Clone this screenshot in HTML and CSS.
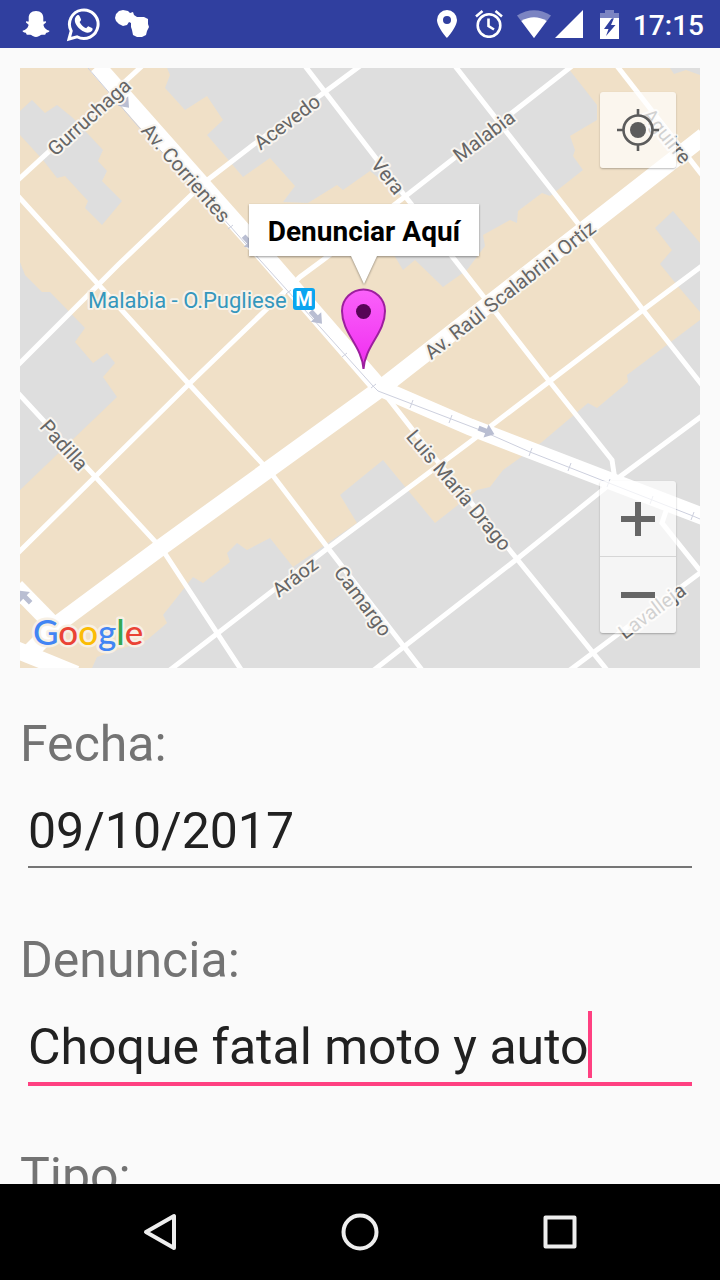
FILE: index.html
```html
<!DOCTYPE html>
<html lang="es">
<head>
<meta charset="utf-8">
<meta name="viewport" content="width=device-width, initial-scale=1">
<title>Denuncia</title>
<link rel="stylesheet" href="styles.css">
</head>
<body>
<header class="status">
  <div class="status-group notices">
    <svg width="28" height="28" viewBox="0 0 28 28" aria-label="Snapchat"><path fill="#fff" d="M14 1c5 0 7.300 3 7.300 7v3.500c1 .4 2-.7 2.700.2.600 1-2.300 2-2.600 3.300.8 3.200 3 5 6 5.800.2 1.500-2.500 1.900-3.400 2.200-.4.700-.2 1.700-1.200 1.800-1.300.1-2.500-.4-4 .3-1.600.8-2.600 2-4.800 2s-3.200-1.200-4.800-2c-1.500-.7-2.700-.2-4-.3-1-.1-.8-1.100-1.200-1.800-.9-.3-3.600-.7-3.400-2.200 3-.8 5.200-2.600 6-5.800C6.300 13.700 3.400 12.700 4 11.700c.7-.9 1.700.2 2.700-.2V8c0-4 2.300-7 7.300-7z"/></svg>
    <svg width="34" height="36" viewBox="0 0 34 36" aria-label="WhatsApp"><path fill="none" stroke="#fff" stroke-width="3" d="M3 33l2.200-8A14.300 14.300 0 1 1 11 30.800z"/><path fill="#fff" d="M11 9.500c1-.8 2-.6 2.500.4l1.500 3.300c.3 1-.3 1.700-1.400 2.900 1.500 3 3.600 5 6.600 6.200 1-1 1.700-2.300 2.600-1.900l3.200 1.600c1 .5.700 2-.2 3-3 3-7.500 1.500-11-1.200-3.300-2.700-6-6.200-6-9.900 0-1.800.9-3.400 2.200-4.400z"/></svg>
    <svg width="36" height="30" viewBox="0 0 36 30" aria-label="Mensajes"><path fill="#fff" d="M1 9L2 5 5 2 9 1 14 2 16 4 19 3 20 6 23 8H30L34 10V15L35 18 33 22 32 26 28 28H23L19 26 18 21 17 18V14L15 13 13 16 9 17 5 15 2 12z"/></svg>
  </div>
  <div class="status-group system">
    <svg class="pin-icon" width="20" height="28" viewBox="0 0 20 28"><path fill="#fff" fill-rule="evenodd" d="M10 0a10 10 0 0 1 10 10c0 7-10 18-10 18S0 17 0 10A10 10 0 0 1 10 0zm0 6a4 4 0 1 0 0 8 4 4 0 0 0 0-8z"/></svg>
    <svg width="28" height="28" viewBox="0 0 28 28"><g fill="none" stroke="#fff" stroke-width="2.600"><circle cx="14" cy="15.500" r="11.300"/><path d="M13.500 8.500v7.500l5.500 3.500M1 6.500L7.500 1M27 6.500L20.500 1"/></g></svg>
    <svg class="wifi-icon" width="34" height="28" viewBox="0 0 34 28"><path fill="#7b84c2" d="M0 5.500Q17-5 34 5.500L17 28z"/><path fill="#fff" d="M4.300 11Q17 3.500 29.700 11L17 28z"/></svg>
    <svg class="cell-icon" width="28" height="28" viewBox="0 0 28 28"><path fill="#fff" d="M28 0v28H0z"/></svg>
    <svg class="battery-icon" width="19" height="29" viewBox="0 0 19 29"><path fill="#7b84c2" d="M0 3h5V0h9v3h5v6H0z"/><path fill="#fff" fill-rule="evenodd" d="M0 8h19v21H0zM12 8L4 19h4.500L6 26l9.500-11H11l3-7z"/></svg>
    <time class="clock">17:15</time>
  </div>
</header>

<main class="content">
  <section class="map" aria-label="Mapa">
    <svg class="map-canvas" viewBox="20 68 680 600">
      <rect class="land" x="20" y="68" width="680" height="600"/>
      <g class="blocks">
        <path d="M20 111L32 100 45 113 57 105 73 118 103 150 98 161 107 171 102 181 122 201 102 225 85 208 88 201 65 176 57 178 43 160 20 135z"/>
        <path d="M167 68L170 75 165 88 185 110 207 96 223 120 207 135 243 177 270 158 295 186 283 202 308 203 337 185 343 190 370 171 410 204 388 245 403 270 415 260 443 287 467 270 485 246 483 235 510 220 517 223 518 211 542 193 550 196 583 170 573 156 575 150 570 136 597 120 597 105 568 68z"/>
        <path d="M670 68L674 74 686 70 700 75V68z"/>
        <path d="M673 211L700 243V312L677 285 660 264 672 250 655 228z"/>
        <path d="M700 320L627 375 628 382 597 408 588 403 542 442 503 470 490 487 477 490 435 523 383 460 340 495 357 523 293 567 270 538 247 550 237 543 227 553 230 562 203 583 193 577 163 615 167 623 147 640 97 657 92 668H700z"/>
        <path d="M20 262L25 275 42 292 50 292 85 328 75 342 93 363 107 353 115 363 103 377 117 397 20 490z"/>
      </g>
      <g class="streets">
        <path d="M18 180L142 66"/>
        <path d="M18 365L119 264 205 182 253 145 360 66"/>
        <path d="M18 553L190 383 300 277 323 260 407 195 572 66"/>
        <path d="M170 670L328 548 470 442 643 310 702 266"/>
        <path d="M374 670L517 559 610 484 702 416"/>
        <path d="M570 670L700 573"/>
        <path d="M18 393L162 549 242 671"/>
        <path d="M18 196L188 383 271 473 328 548 422 670"/>
        <path d="M380 388L430 452 517 559 607 670"/>
        <path d="M305 66L405 196 550 382 612 460 615 480"/>
        <path d="M455 66L580 226 643 310 702 385"/>
        <path d="M617 66L702 175"/>
        <path d="M667 508L662 523 702 573"/>
      </g>
      <g class="avenues">
        <path d="M97 66L269 260 380 388 470 427 704 517"/>
        <path d="M44 634L160 548 380 389 704 136"/>
        <path d="M16 587L60 632"/>
        <path d="M12 648L76 674"/>
        <path d="M30 652L60 622"/>
      </g>
      <g class="transit">
        <path d="M88 68L137 125 230 226 260 260 373 386 378 391 412 404 480 430 530 452 693 516 700 519"/>
        <path d="M342 357l5-4M371 388l5-4M410 408l3-8M449 423l3-8M529 456l3-8M568 471l3-8M607 487l3-8M650 504l3-8M691 520l3-8M228 229l5-4M286 294l5-4"/>
      </g>
      <defs><path id="arrow" d="M-8-2.500H0V-7L9 0 0 7V2.500H-8z"/></defs>
      <g class="arrows">
        <use href="#arrow" transform="translate(123 101) rotate(48)"/>
        <use href="#arrow" transform="translate(249 242) rotate(48)"/>
        <use href="#arrow" transform="translate(316 317) rotate(48)"/>
        <use href="#arrow" transform="translate(486 431) rotate(21)"/>
        <use href="#arrow" transform="translate(25 597) rotate(225)"/>
      </g>
      <g class="street-names">
        <text transform="translate(89 117) rotate(-42)" y="7">Gurruchaga</text>
        <text transform="translate(186 173) rotate(49)" y="7">Av. Corrientes</text>
        <text transform="translate(287 122) rotate(-37)" y="7">Acevedo</text>
        <text transform="translate(388 176) rotate(52)" y="7">Vera</text>
        <text transform="translate(484 136) rotate(-37)" y="7">Malabia</text>
        <text transform="translate(667 136) rotate(51)" y="7">Aguirre</text>
        <text transform="translate(510 290) rotate(-38)" y="7">Av. Raúl Scalabrini Ortíz</text>
        <text transform="translate(64 445) rotate(48)" y="7">Padilla</text>
        <text transform="translate(459 490) rotate(50)" y="7">Luis María Drago</text>
        <text transform="translate(295 577) rotate(-37)" y="7">Aráoz</text>
        <text transform="translate(363 601) rotate(53)" y="7">Camargo</text>
        <text transform="translate(652 611) rotate(-37)" y="7">Lavalleja</text>
      </g>
      <text class="station" x="88" y="308">Malabia - O.Pugliese</text>
      <rect x="293" y="288" width="22" height="22" rx="3" fill="#0aa5f0"/>
      <text class="metro" x="304" y="306">M</text>
      <text class="brand" x="33" y="645"><tspan fill="#4285f4">G</tspan><tspan fill="#ea4335">o</tspan><tspan fill="#fbbc05">o</tspan><tspan fill="#4285f4">g</tspan><tspan fill="#34a853">l</tspan><tspan fill="#ea4335">e</tspan></text>
      <defs><linearGradient id="pin" x1="0" y1="0" x2="0" y2="1"><stop offset="0" stop-color="#fa62fa"/><stop offset="1" stop-color="#f02cf0"/></linearGradient></defs>
      <path d="M363.500 369C362 346 342 333 342 311a21.500 21.500 0 0 1 43 0C385 333 365 346 363.500 369z" fill="url(#pin)" stroke="#9c1f9e" stroke-width="2"/>
      <circle cx="363.500" cy="311.500" r="7.500" fill="#570557"/>
      <path class="callout" d="M249 204H479V256H377L364 284 351 256H249z"/>
      <text class="callout-text" x="364" y="241">Denunciar Aquí</text>
    </svg>
    <button class="map-button locate" aria-label="Mi ubicación">
      <svg width="42" height="42" viewBox="0 0 42 42"><g fill="none" stroke="#5c5c5c" stroke-width="2.600"><circle cx="21" cy="21" r="14.500"/><path d="M21 0v7M21 35v7M0 21h7M35 21h7"/></g><circle cx="21" cy="21" r="8" fill="#5c5c5c"/></svg>
    </button>
    <div class="zoom-controls">
      <button class="map-button" aria-label="Acercar"><svg width="34" height="34" viewBox="0 0 34 34"><path d="M0 17h34M17 0v34" stroke="#666" stroke-width="6"/></svg></button>
      <button class="map-button" aria-label="Alejar"><svg width="34" height="34" viewBox="0 0 34 34"><path d="M0 17h34" stroke="#666" stroke-width="6"/></svg></button>
    </div>
  </section>

  <form class="form">
    <div class="field">
      <label for="fecha">Fecha:</label>
      <div class="entry"><input id="fecha" type="text" value="09/10/2017"></div>
    </div>
    <div class="field">
      <label for="denuncia">Denuncia:</label>
      <div class="entry active"><input id="denuncia" type="text" value="Choque fatal moto y auto"><span class="caret"></span></div>
    </div>
    <div class="field">
      <label for="tipo">Tipo:</label>
      <div class="entry"><input id="tipo" type="text"></div>
    </div>
  </form>
</main>

<nav class="navbar">
  <button aria-label="Atrás"><svg width="40" height="40" viewBox="0 0 40 40"><path d="M34 4v32L6 20z"/></svg></button>
  <button aria-label="Inicio"><svg width="40" height="40" viewBox="0 0 40 40"><circle cx="20" cy="20" r="16.500"/></svg></button>
  <button aria-label="Recientes"><svg width="40" height="40" viewBox="0 0 40 40"><rect x="5.500" y="5.500" width="29" height="29"/></svg></button>
</nav>
</body>
</html>
```

FILE: styles.css
```css
* { box-sizing: border-box; }

body {
  margin: 0;
  height: 100vh;
  display: flex;
  flex-direction: column;
  background: #fafafa;
  font-family: Roboto, "Noto Sans", sans-serif;
}

button {
  border: 0;
  padding: 0;
  background: none;
  display: flex;
  align-items: center;
  justify-content: center;
}

.status {
  flex: none;
  height: 48px;
  padding: 0 16px 0 22px;
  display: flex;
  align-items: center;
  justify-content: space-between;
  background: #303f9f;
}

.status-group { display: flex; align-items: center; }
.notices { gap: 16px; }
.notices svg:last-child { margin-left: -2px; }
.pin-icon { margin-right: 18px; }
.wifi-icon { margin-left: 14px; }
.cell-icon { margin-left: 4px; }
.battery-icon { margin: 0 14px 0 17px; }

.clock {
  padding-top: 3px;
  color: #fff;
  font-size: 28px;
  font-weight: 500;
  line-height: 32px;
}

.content {
  flex: 1;
  min-height: 0;
  overflow: hidden;
  padding: 20px 20px 0;
}

.map { position: relative; }
.map-canvas { display: block; width: 100%; }

.land { fill: #f0e0c7; }
.blocks { fill: #dedede; }
.streets, .avenues { fill: none; stroke: #fff; }
.streets { stroke-width: 5px; }
.avenues { stroke-width: 17px; }
.transit { fill: none; stroke: #cdd0de; stroke-width: 1px; }
.arrows { fill: #b9bed2; }

.street-names text, .station, .brand {
  paint-order: stroke;
  stroke-linejoin: round;
}

.street-names {
  font-size: 20px;
  fill: #666;
  stroke: #f8f5f0;
  stroke-width: 4px;
  text-anchor: middle;
}

.station {
  font-size: 22px;
  fill: #3597bd;
  stroke: #f8f2e8;
  stroke-width: 4px;
}

.metro {
  font-size: 20px;
  font-weight: 700;
  fill: #fff;
  text-anchor: middle;
}

.brand {
  font-family: Lato, "Open Sans", sans-serif;
  font-size: 35px;
  font-weight: 500;
  stroke: #f7f0e5;
  stroke-width: 5px;
}

.callout { fill: #fff; filter: drop-shadow(0 1px 1px #0006); }

.callout-text {
  font-size: 28px;
  font-weight: 700;
  text-anchor: middle;
}

.map-button {
  width: 76px;
  height: 76px;
  background: rgba(255, 255, 255, 0.7);
}

.locate, .zoom-controls {
  position: absolute;
  right: 24px;
  border-radius: 3px;
  box-shadow: 0 1px 2px #0004;
}

.locate { top: 24px; }
.zoom-controls { bottom: 35px; overflow: hidden; }
.zoom-controls .map-button:first-child { border-bottom: 1px solid #d6d6d6; }

.form {
  margin-top: 46px;
  display: flex;
  flex-direction: column;
  gap: 62px;
}

.field { display: flex; flex-direction: column; }

label {
  font-size: 50px;
  line-height: 60px;
  color: #737373;
}

.entry { position: relative; margin: 0 8px; }

input {
  display: block;
  width: 100%;
  height: 94px;
  padding: 27px 0 5px;
  border: 0;
  border-bottom: 2px solid #757575;
  outline: 0;
  background: none;
  font: 50px/60px Roboto, "Noto Sans", sans-serif;
  color: #212121;
}

.active input {
  height: 96px;
  border-bottom: 4px solid #ff4081;
}

.active { margin-bottom: -2px; }

.caret {
  position: absolute;
  left: 560px;
  top: 21px;
  width: 4px;
  height: 67px;
  background: #ff4081;
}

.navbar {
  flex: none;
  height: 96px;
  padding: 0 60px;
  display: grid;
  grid-template-columns: repeat(3, 1fr);
  background: #000;
}

.navbar svg {
  fill: none;
  stroke: #eee;
  stroke-width: 4px;
  stroke-linejoin: round;
}
```
